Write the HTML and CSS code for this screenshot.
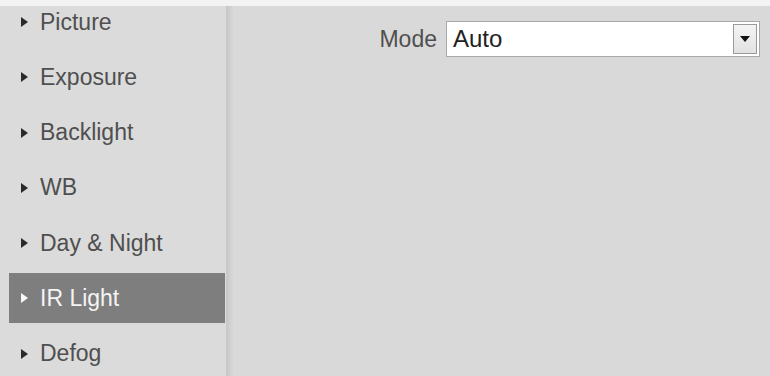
FILE: index.html
```html
<!DOCTYPE html>
<html>
<head>
<meta charset="utf-8">
<link rel="stylesheet" href="styles.css">
</head>
<body>
<div class="topstrip"></div>
<div class="page">
  <nav class="sidebar">
    <ul class="menu">
      <li class="item"><span class="tri"></span>Picture</li>
      <li class="item"><span class="tri"></span>Exposure</li>
      <li class="item"><span class="tri"></span>Backlight</li>
      <li class="item"><span class="tri"></span>WB</li>
      <li class="item"><span class="tri"></span>Day &amp; Night</li>
      <li class="item active"><span class="tri"></span>IR Light</li>
      <li class="item"><span class="tri"></span>Defog</li>
    </ul>
  </nav>
  <div class="divider"></div>
  <main class="content">
    <div class="field">
      <span class="label">Mode</span>
      <div class="select">
        <span class="value">Auto</span>
        <span class="btn"><svg width="10" height="6" viewBox="0 0 10 6"><path d="M0 0H10L5 6Z" fill="#111"/></svg></span>
      </div>
    </div>
  </main>
</div>
</body>
</html>
```
FILE: styles.css
```css
html, body {
  margin: 0;
  padding: 0;
  background: #d9d9d9;
  font-family: "Liberation Sans", Arial, sans-serif;
  overflow: hidden;
}
.topstrip {
  position: relative;
  z-index: 2;
  height: 6px;
  background: #f3f3f3;
}
.page {
  display: flex;
  height: 370px;
}
.sidebar {
  width: 226px;
  background: #dbdbdb;
}
.menu {
  list-style: none;
  margin: -9px 0 0 9px;
  padding: 0;
  display: flex;
  flex-direction: column;
  gap: 5.3px;
}
.item {
  height: 50px;
  width: 216px;
  display: flex;
  align-items: center;
  padding-left: 12px;
  box-sizing: border-box;
  font-size: 23px;
  color: #4f4f4f;
}
.item .tri {
  width: 0;
  height: 0;
  border-left: 7px solid #2a2a2a;
  border-top: 5px solid transparent;
  border-bottom: 5px solid transparent;
  margin-right: 12px;
}
.item.active {
  background: #7e7e7e;
  color: #f4f4f4;
}
.item.active .tri {
  border-left-color: #f8f8f8;
}
.divider {
  width: 7px;
  background: linear-gradient(to right, #c6c6c6, #cfcfcf 50%, #d7d7d7);
}
.content {
  flex: 1;
  padding: 15px 10px 0 0;
}
.field {
  display: flex;
  align-items: center;
  justify-content: flex-end;
  gap: 9px;
}
.label {
  font-size: 23px;
  color: #4f4f4f;
}
.select {
  width: 314px;
  height: 36px;
  box-sizing: border-box;
  border: 1px solid #a8a8a8;
  background: #fff;
  display: flex;
  align-items: center;
  justify-content: space-between;
  padding: 0 2px 0 6px;
}
.value {
  font-size: 24px;
  color: #222;
}
.btn {
  width: 24px;
  height: 30px;
  box-sizing: border-box;
  border: 1px solid #9a9a9a;
  background: linear-gradient(#f4f4f4, #e2e2e2);
  display: flex;
  align-items: center;
  justify-content: center;
}
```
